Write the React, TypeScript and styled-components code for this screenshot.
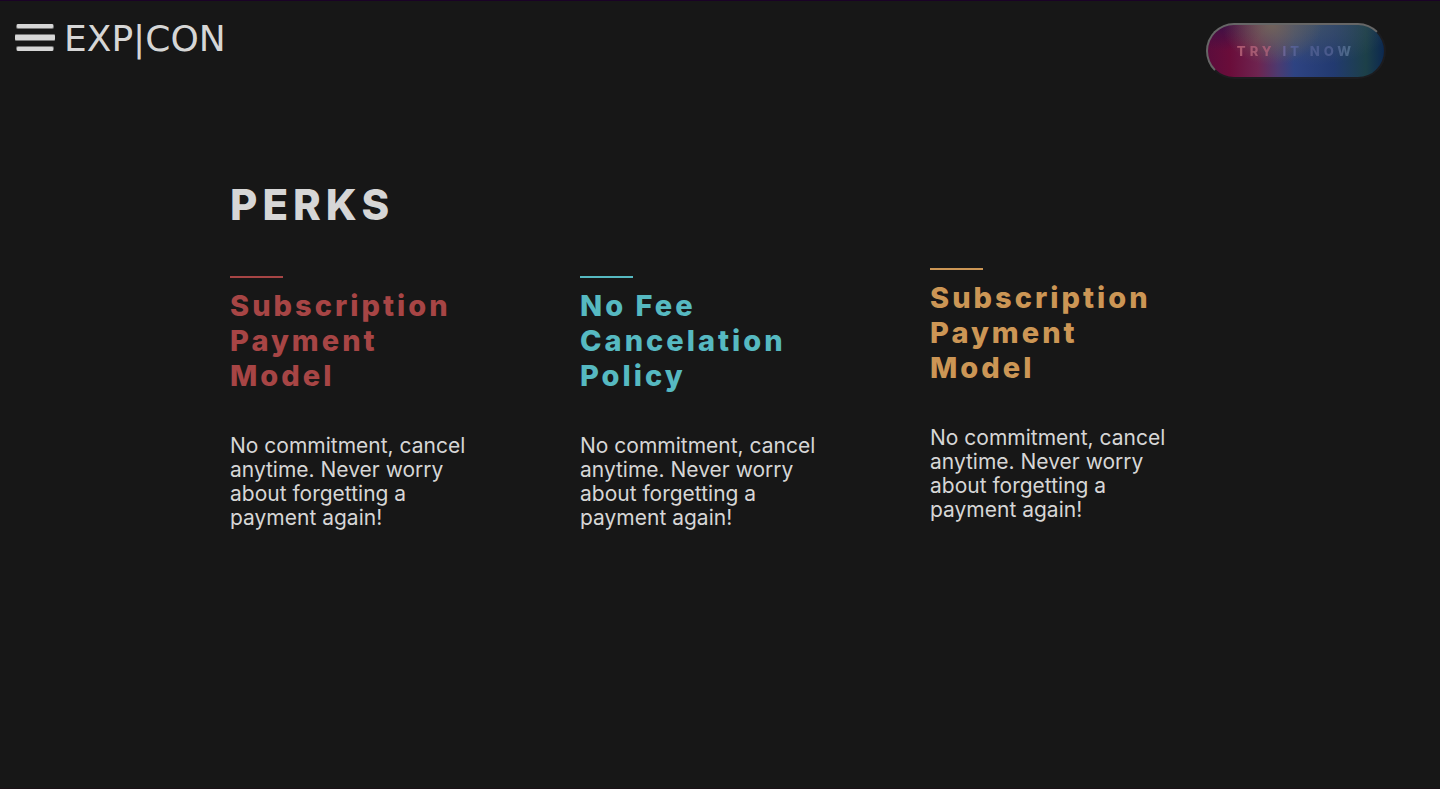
import React from 'react';
import styled, { createGlobalStyle } from 'styled-components';

const GlobalStyle = createGlobalStyle`
  *, *::before, *::after { box-sizing: border-box; }
  html { background: #171717; }
  body {
    margin: 0;
    color: #d6d6d6;
    font-family: Inter, "Liberation Sans", sans-serif;
  }
`;

const Page = styled.div`
  min-height: 100vh;
  background: #171717;
  border-top: 1px solid #1a0226;
  border-bottom: 1px solid #1a1116;
`;

const TopBar = styled.header`
  display: flex;
  align-items: flex-start;
  justify-content: space-between;
  padding: 22px 54px 0 14px;
`;

const Brand = styled.div`
  display: flex;
  align-items: flex-start;
  gap: 8px;
`;

const MenuButton = styled.button`
  display: block;
  width: 42px;
  height: 30px;
  padding: 0;
  border: 0;
  background: none;
  cursor: pointer;

  svg { display: block; }
`;

const BrandName = styled.a`
  color: #d6d6d6;
  font-family: "DejaVu Sans", sans-serif;
  font-size: 36px;
  line-height: 32px;
  text-decoration: none;
`;

const TryButton = styled.button`
  width: 180px;
  height: 56px;
  padding: 0;
  border: 2px solid;
  border-color: #666 #1c1c1f #1c1c1f #666;
  border-radius: 28px;
  background:
    radial-gradient(ellipse 50px 40px at 64px 0, rgba(116, 102, 90, 0.9), rgba(116, 102, 90, 0) 100%),
    radial-gradient(ellipse 40px 26px at 16px 0, rgba(52, 16, 72, 0.8), rgba(52, 16, 72, 0) 100%),
    radial-gradient(ellipse 80px 40px at 104px 0, rgba(70, 88, 100, 0.7), rgba(70, 88, 100, 0) 100%),
    linear-gradient(90deg, #5c0c3c 0, #6a0d3a 22px, #6e2450 50px, #4c3a70 70px, #2e4382 86px, #223a70 126px, #1c4048 158px, #0c2850 176px);
  background-origin: padding-box;
  font-family: inherit;
  font-size: 13px;
  font-weight: 800;
  line-height: 16px;
  letter-spacing: 4px;
  cursor: pointer;

  span {
    background: linear-gradient(90deg, #ae5870 0, #9c5c74 30%, #60659a 42%, #4c5c8e 55%, #4a5a8c 80%, #4f7088 100%);
    background-clip: text;
    -webkit-background-clip: text;
    color: transparent;
  }
`;

const Perks = styled.main`
  max-width: 980px;
  margin: 0 auto;
  padding: 99px 0;
`;

const Title = styled.h1`
  margin: 0 0 37px;
  font-size: 42px;
  font-weight: 800;
  line-height: 53px;
  letter-spacing: 5px;
`;

const PerkGrid = styled.div`
  display: grid;
  grid-template-columns: repeat(3, 1fr);
  column-gap: 70px;
`;

const Perk = styled.article<{ $accent: string; $lowered: boolean }>`
  padding: ${({ $lowered }) => ($lowered ? 8 : 0)}px 32px 0 0;
  color: ${({ $accent }) => $accent};

  &::before {
    content: "";
    display: block;
    width: 53px;
    height: 2px;
    background: currentColor;
  }
`;

const PerkTitle = styled.h2`
  margin: 10px 0 41px;
  font-size: 29px;
  font-weight: 800;
  line-height: 35px;
  letter-spacing: 3px;
`;

const PerkText = styled.p`
  margin: 0;
  color: #d6d6d6;
  font-size: 21px;
  line-height: 24px;
`;

const description =
  'No commitment, cancel anytime. Never worry about forgetting a payment again!';

const perks = [
  { title: 'Subscription Payment Model', accent: '#a74545', lowered: true },
  { title: 'No Fee Cancelation Policy', accent: '#56b9c1', lowered: true },
  { title: 'Subscription Payment Model', accent: '#cc9655', lowered: false },
];

const MenuIcon = () => (
  <svg width="42" height="30" viewBox="0 0 42 30" aria-hidden="true">
    <g fill="#777">
      <rect x="2" y="1" width="38" height="5" rx="2" />
      <rect x="1" y="11" width="40" height="7" rx="1" />
      <rect x="2" y="23" width="38" height="5" rx="2" />
    </g>
    <g fill="#d6d6d6">
      <rect x="3" y="1" width="36" height="4" rx="1" />
      <rect x="1" y="12" width="40" height="5" rx="1" />
      <rect x="3" y="24" width="36" height="4" rx="1" />
    </g>
  </svg>
);

export default function App() {
  return (
    <Page>
      <GlobalStyle />
      <TopBar>
        <Brand>
          <MenuButton type="button" aria-label="Menu">
            <MenuIcon />
          </MenuButton>
          <BrandName href="#">EXP|CON</BrandName>
        </Brand>
        <TryButton type="button">
          <span>TRY IT NOW</span>
        </TryButton>
      </TopBar>
      <Perks>
        <Title>PERKS</Title>
        <PerkGrid>
          {perks.map((perk, index) => (
            <Perk key={index} $accent={perk.accent} $lowered={perk.lowered}>
              <PerkTitle>{perk.title}</PerkTitle>
              <PerkText>{description}</PerkText>
            </Perk>
          ))}
        </PerkGrid>
      </Perks>
    </Page>
  );
}
